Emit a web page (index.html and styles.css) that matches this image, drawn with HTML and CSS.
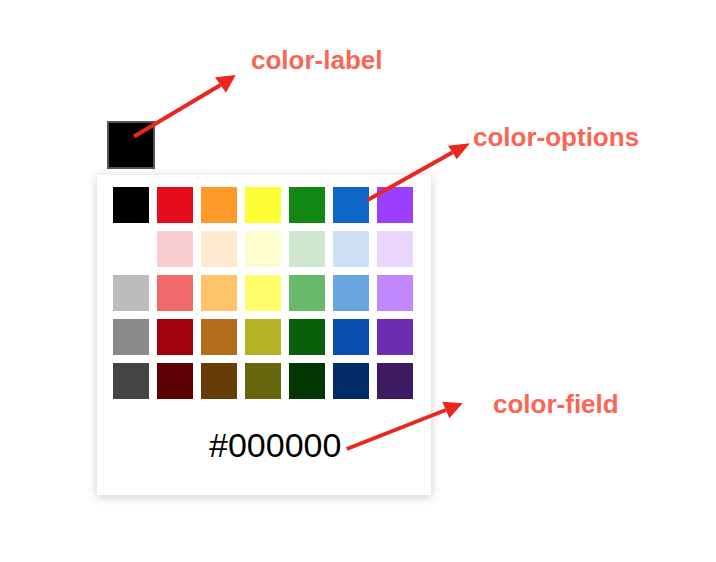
FILE: index.html
```html
<!DOCTYPE html>
<html lang="en">
<head>
<meta charset="utf-8">
<title>Color picker</title>
<link rel="stylesheet" href="styles.css">
</head>
<body>
<div class="stage">
  <div class="picker">
    <div class="color-label"></div>
    <div class="panel">
      <div class="options">
        <span class="sw" style="background:#000000"></span>
        <span class="sw" style="background:#e50d1b"></span>
        <span class="sw" style="background:#fd9a2a"></span>
        <span class="sw" style="background:#fefe37"></span>
        <span class="sw" style="background:#138714"></span>
        <span class="sw" style="background:#0e67c8"></span>
        <span class="sw" style="background:#993ffd"></span>

        <span class="sw" style="background:#ffffff"></span>
        <span class="sw" style="background:#f9cdcf"></span>
        <span class="sw" style="background:#feebcf"></span>
        <span class="sw" style="background:#fefdd0"></span>
        <span class="sw" style="background:#cfe7d0"></span>
        <span class="sw" style="background:#cee0f5"></span>
        <span class="sw" style="background:#ead6fd"></span>

        <span class="sw" style="background:#bcbcbc"></span>
        <span class="sw" style="background:#f0696b"></span>
        <span class="sw" style="background:#fec46c"></span>
        <span class="sw" style="background:#fefe6c"></span>
        <span class="sw" style="background:#69b96b"></span>
        <span class="sw" style="background:#69a6df"></span>
        <span class="sw" style="background:#c187fd"></span>

        <span class="sw" style="background:#8a8a8a"></span>
        <span class="sw" style="background:#a0030f"></span>
        <span class="sw" style="background:#b36c19"></span>
        <span class="sw" style="background:#b4b225"></span>
        <span class="sw" style="background:#0a5f0b"></span>
        <span class="sw" style="background:#0b4caf"></span>
        <span class="sw" style="background:#6c2db0"></span>

        <span class="sw" style="background:#444444"></span>
        <span class="sw" style="background:#5c0003"></span>
        <span class="sw" style="background:#663d09"></span>
        <span class="sw" style="background:#66660f"></span>
        <span class="sw" style="background:#043604"></span>
        <span class="sw" style="background:#042b66"></span>
        <span class="sw" style="background:#3e1a63"></span>
      </div>
      <div class="color-field">#000000</div>
    </div>
  </div>

  <div class="annotations">
    <svg class="arrows" width="716" height="562" viewBox="0 0 716 562">
      <g stroke="#e9271f" stroke-width="4" fill="none">
        <line x1="134" y1="136.5" x2="220.5" y2="85"/>
        <line x1="367.7" y1="200" x2="452.3" y2="152.5"/>
        <line x1="346.7" y1="449" x2="445.8" y2="410"/>
      </g>
      <g fill="#e9271f">
        <polygon points="235.7,75 215,77.3 226,92.7"/>
        <polygon points="470,143.3 448,145.7 456.7,159.3"/>
        <polygon points="462.7,403.3 442.3,401.7 449.3,418.3"/>
      </g>
    </svg>
    <div class="note note-label">color-label</div>
    <div class="note note-options">color-options</div>
    <div class="note note-field">color-field</div>
  </div>
</div>
</body>
</html>
```

FILE: styles.css
```css
html, body {
  margin: 0;
  padding: 0;
  background: #ffffff;
}

.stage {
  position: relative;
  width: 716px;
  height: 562px;
  overflow: hidden;
  font-family: "Liberation Sans", Arial, sans-serif;
}

.picker {
  display: flex;
  flex-direction: column;
  align-items: flex-start;
  padding: 121px 0 0 97px;
}

.color-label {
  width: 44px;
  height: 44px;
  margin-left: 10px;
  background: #000000;
  border: 2px solid #555555;
}

.panel {
  margin-top: 6px;
  width: 334px;
  box-sizing: border-box;
  padding: 12px 18px 30px 16px;
  background: #ffffff;
  box-shadow: 0 2px 10px rgba(0, 0, 0, 0.2);
}

.options {
  display: grid;
  grid-template-columns: repeat(7, 36px);
  grid-auto-rows: 36px;
  gap: 8px;
}

.sw {
  display: block;
  width: 36px;
  height: 36px;
}

.color-field {
  margin-top: 26px;
  padding-left: 96px;
  font-size: 34px;
  line-height: 40px;
  color: #000000;
}

.annotations {
  position: absolute;
  left: 0;
  top: 0;
  width: 716px;
  height: 562px;
  pointer-events: none;
}

.arrows {
  position: absolute;
  left: 0;
  top: 0;
}

.note {
  position: absolute;
  font-family: "Liberation Sans", Arial, sans-serif;
  font-weight: bold;
  font-size: 26px;
  line-height: 26px;
  color: #fa6555;
  white-space: nowrap;
}

.note-label { left: 251px; top: 47px; }
.note-options { left: 473px; top: 124px; }
.note-field { left: 493px; top: 391px; }
```
